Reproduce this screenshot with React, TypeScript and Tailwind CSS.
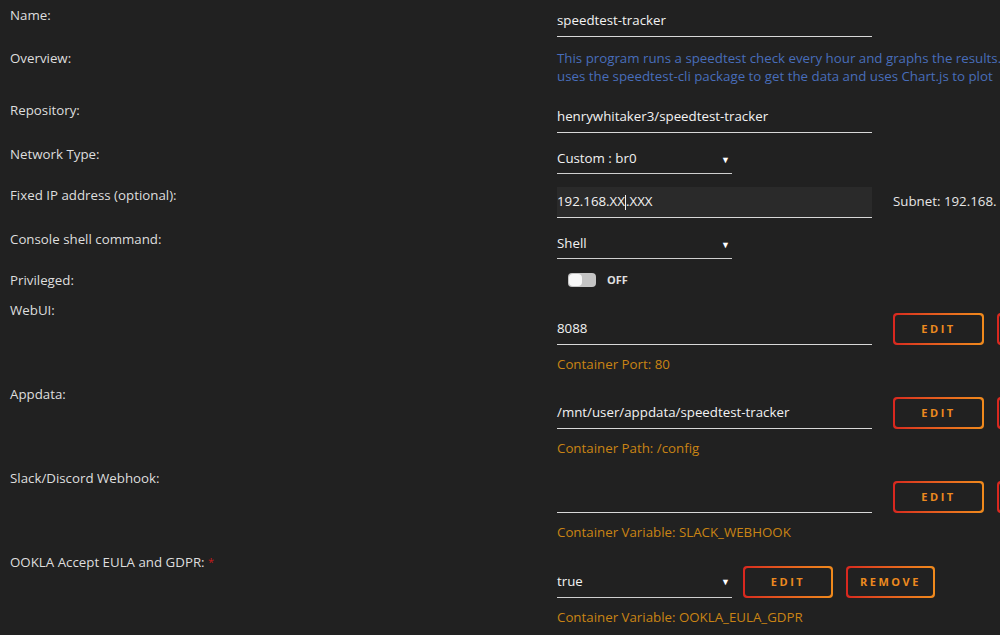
import React from "react";

const labelCls = "w-[547px] shrink-0 leading-[18px] text-[#dedede]";

function GradientButton({ children, className = "" }: { children?: React.ReactNode; className?: string }) {
  return (
    <div className={`shrink-0 rounded-[4px] bg-gradient-to-r from-[#d8261f] to-[#f08a1c] p-[2px] ${className}`}>
      <div className="flex h-full w-full items-center justify-center rounded-[3px] bg-[#212121] text-[11px] font-bold tracking-[2.5px] text-[#ec8a1f]">
        {children}
      </div>
    </div>
  );
}

function TextValue({ value, className = "" }: { value: string; className?: string }) {
  return (
    <div className={`flex w-[315px] items-center border-b border-[#d8d8d8] text-[#f2f2f2] ${className}`}>
      {value}
    </div>
  );
}

function SelectValue({ value, className = "" }: { value: string; className?: string }) {
  return (
    <div className={`flex w-[175px] items-center justify-between border-b border-[#cfcfcf] pr-[2px] text-[#f2f2f2] ${className}`}>
      <span>{value}</span>
      <span className="text-[9px] leading-none text-white">▼</span>
    </div>
  );
}

function MappingRow({
  label,
  value,
  note,
}: {
  label: React.ReactNode;
  value: string;
  note: string;
}) {
  return (
    <div className="flex">
      <div className={labelCls}>{label}</div>
      <div className="flex flex-col pt-3">
        <div className="flex items-center">
          <TextValue value={value} className="h-8" />
          <GradientButton className="ml-[21px] h-8 w-[91px]">EDIT</GradientButton>
          {/* remove button, cut off by the window edge */}
          <GradientButton className="ml-[13px] h-8 w-[90px]" />
        </div>
        <div className="mt-[10px] leading-[18px] text-[#c98414]">{note}</div>
      </div>
    </div>
  );
}

export default function App() {
  return (
    <div className="h-[635px] w-[1000px] overflow-hidden bg-[#212121] pl-[10px] pt-[6px] font-['Open_Sans',sans-serif] text-[13.3px]">
      <div className="flex flex-col gap-3">
        {/* Name */}
        <div className="flex">
          <div className={labelCls}>Name:</div>
          <TextValue value="speedtest-tracker" className="h-[31px]" />
        </div>

        {/* Overview */}
        <div className="flex h-10">
          <div className={labelCls}>Overview:</div>
          <div className="whitespace-nowrap leading-[18px] text-[#486dba]">
            <div>This program runs a speedtest check every hour and graphs the results.</div>
            <div>uses the speedtest-cli package to get the data and uses Chart.js to plot</div>
          </div>
        </div>

        {/* Repository */}
        <div className="flex">
          <div className={labelCls}>Repository:</div>
          <TextValue value="henrywhitaker3/speedtest-tracker" className="h-8" />
        </div>

        {/* Network type */}
        <div className="flex">
          <div className={labelCls}>Network Type:</div>
          <SelectValue value="Custom : br0" className="h-[29px]" />
        </div>

        {/* Fixed IP */}
        <div className="flex">
          <div className={labelCls}>Fixed IP address (optional):</div>
          <div className="mt-px flex h-[31px] w-[315px] items-center border-b border-[#d8d8d8] bg-[#2a2a2a] text-[#f2f2f2]">
            <span>192.168.XX</span>
            <span className="h-[15px] w-px bg-[#f2f2f2]" />
            <span>.XXX</span>
          </div>
          <div className="ml-[21px] whitespace-nowrap pt-[6px] leading-[18px] text-[#e6e6e6]">Subnet: 192.168.</div>
        </div>

        {/* Console */}
        <div className="flex">
          <div className={labelCls}>Console shell command:</div>
          <SelectValue value="Shell" className="h-[29px]" />
        </div>

        {/* Privileged */}
        <div className="flex h-[18px]">
          <div className={labelCls}>Privileged:</div>
          <div className="flex items-center pl-[11px]">
            <div className="flex h-[14px] w-[28px] items-center rounded-[4px] bg-[#c4c4c4] p-px">
              <div className="h-[12px] w-[13px] rounded-[4px] bg-[#f7f7f7]" />
            </div>
            <span className="ml-[11px] text-[11px] font-bold text-[#e0e0e0]">OFF</span>
          </div>
        </div>

        <MappingRow label="WebUI:" value="8088" note="Container Port: 80" />
        <MappingRow label="Appdata:" value="/mnt/user/appdata/speedtest-tracker" note="Container Path: /config" />
        <MappingRow label="Slack/Discord Webhook:" value="" note="Container Variable: SLACK_WEBHOOK" />

        {/* OOKLA */}
        <div className="flex">
          <div className={labelCls}>
            OOKLA Accept EULA and GDPR: <span className="align-top text-[11px] text-[#c41a1a]">*</span>
          </div>
          <div className="flex flex-col pt-[13px]">
            <div className="flex items-center">
              <SelectValue value="true" className="h-[31px]" />
              <GradientButton className="ml-[11px] h-8 w-[90px]">EDIT</GradientButton>
              <GradientButton className="ml-[13px] h-8 w-[89px]">REMOVE</GradientButton>
            </div>
            <div className="mt-[10px] leading-[18px] text-[#c98414]">Container Variable: OOKLA_EULA_GDPR</div>
          </div>
        </div>
      </div>
    </div>
  );
}
